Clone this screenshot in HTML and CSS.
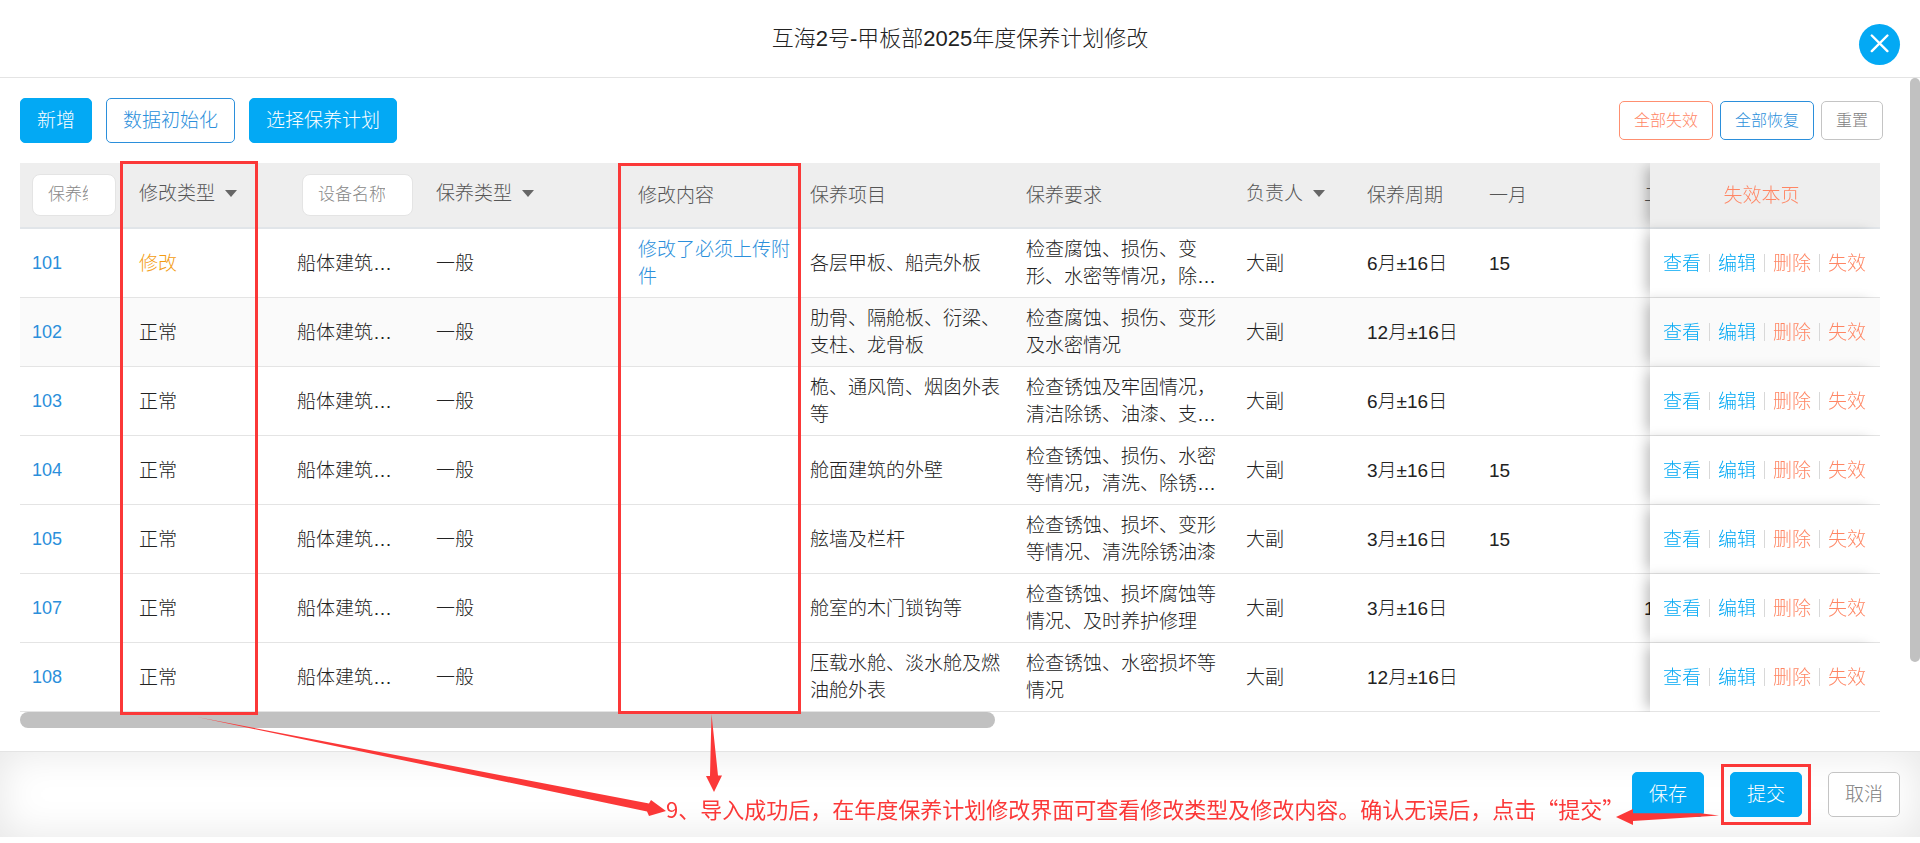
FILE: index.html
```html
<!DOCTYPE html>
<html lang="zh-CN">
<head>
<meta charset="utf-8">
<title>互海2号-甲板部2025年度保养计划修改</title>
<link rel="stylesheet" href="styles.css">
</head>
<body>
<div class="dialog">
  <header class="dialog-header">
    <h1 class="dialog-title">互海2号-甲板部2025年度保养计划修改</h1>
    <button class="close" type="button" aria-label="关闭">
      <svg width="19" height="21" viewBox="0 0 19 21" fill="none" stroke="#fff" stroke-width="2.4" stroke-linecap="round"><path d="M1.8 1.5l15.6 15.6M17.4 1.5l-15.6 15.6"/></svg>
    </button>
  </header>

  <main class="dialog-body">
    <div class="toolbar">
      <div class="toolbar-left">
        <button class="btn btn-primary" type="button">新增</button>
        <button class="btn btn-outline" type="button">数据初始化</button>
        <button class="btn btn-primary" type="button">选择保养计划</button>
      </div>
      <div class="toolbar-right">
        <button class="btn btn-small btn-warn" type="button">全部失效</button>
        <button class="btn btn-small btn-outline" type="button">全部恢复</button>
        <button class="btn btn-small btn-plain" type="button">重置</button>
      </div>
    </div>

    <div class="table-wrap">
      <table class="plan">
        <colgroup>
          <col class="c-no"><col class="c-change"><col class="c-device"><col class="c-kind"><col class="c-content"><col class="c-item"><col class="c-req"><col class="c-owner"><col class="c-cycle"><col class="c-month"><col class="c-month"><col class="c-actions">
        </colgroup>
        <thead>
          <tr>
            <th class="search"><input class="filter" type="text" placeholder="保养编号" aria-label="保养编号"></th>
            <th><button class="sort" type="button">修改类型<span class="caret"></span></button></th>
            <th class="search"><input class="filter filter-device" type="text" placeholder="设备名称" aria-label="设备名称"></th>
            <th><button class="sort" type="button">保养类型<span class="caret"></span></button></th>
            <th>修改内容</th>
            <th>保养项目</th>
            <th>保养要求</th>
            <th><button class="sort" type="button">负责人<span class="caret"></span></button></th>
            <th>保养周期</th>
            <th>一月</th>
            <th>二月</th>
            <th class="actions-head"><a class="warn" href="#">失效本页</a></th>
          </tr>
        </thead>
        <tbody>
          <tr>
            <td><a class="link number" href="#">101</a></td><td class="changed">修改</td><td>船体建筑…</td><td>一般</td>
            <td><a class="link" href="#">修改了必须上传附件</a></td><td>各层甲板、船壳外板</td><td>检查腐蚀、损伤、变形、水密等情况，除…</td>
            <td>大副</td><td>6月±16日</td><td>15</td><td></td>
            <td class="actions"><div class="ops"><a href="#">查看</a><a href="#">编辑</a><a class="warn" href="#">删除</a><a class="warn" href="#">失效</a></div></td>
          </tr>
          <tr>
            <td><a class="link number" href="#">102</a></td><td>正常</td><td>船体建筑…</td><td>一般</td>
            <td></td><td>肋骨、隔舱板、衍梁、支柱、龙骨板</td><td>检查腐蚀、损伤、变形及水密情况</td>
            <td>大副</td><td>12月±16日</td><td></td><td></td>
            <td class="actions"><div class="ops"><a href="#">查看</a><a href="#">编辑</a><a class="warn" href="#">删除</a><a class="warn" href="#">失效</a></div></td>
          </tr>
          <tr>
            <td><a class="link number" href="#">103</a></td><td>正常</td><td>船体建筑…</td><td>一般</td>
            <td></td><td>桅、通风筒、烟囱外表等</td><td>检查锈蚀及牢固情况，清洁除锈、油漆、支…</td>
            <td>大副</td><td>6月±16日</td><td></td><td></td>
            <td class="actions"><div class="ops"><a href="#">查看</a><a href="#">编辑</a><a class="warn" href="#">删除</a><a class="warn" href="#">失效</a></div></td>
          </tr>
          <tr>
            <td><a class="link number" href="#">104</a></td><td>正常</td><td>船体建筑…</td><td>一般</td>
            <td></td><td>舱面建筑的外壁</td><td>检查锈蚀、损伤、水密等情况，清洗、除锈…</td>
            <td>大副</td><td>3月±16日</td><td>15</td><td></td>
            <td class="actions"><div class="ops"><a href="#">查看</a><a href="#">编辑</a><a class="warn" href="#">删除</a><a class="warn" href="#">失效</a></div></td>
          </tr>
          <tr>
            <td><a class="link number" href="#">105</a></td><td>正常</td><td>船体建筑…</td><td>一般</td>
            <td></td><td>舷墙及栏杆</td><td>检查锈蚀、损坏、变形等情况、清洗除锈油漆</td>
            <td>大副</td><td>3月±16日</td><td>15</td><td></td>
            <td class="actions"><div class="ops"><a href="#">查看</a><a href="#">编辑</a><a class="warn" href="#">删除</a><a class="warn" href="#">失效</a></div></td>
          </tr>
          <tr>
            <td><a class="link number" href="#">107</a></td><td>正常</td><td>船体建筑…</td><td>一般</td>
            <td></td><td>舱室的木门锁钩等</td><td>检查锈蚀、损坏腐蚀等情况、及时养护修理</td>
            <td>大副</td><td>3月±16日</td><td></td><td>15</td>
            <td class="actions"><div class="ops"><a href="#">查看</a><a href="#">编辑</a><a class="warn" href="#">删除</a><a class="warn" href="#">失效</a></div></td>
          </tr>
          <tr>
            <td><a class="link number" href="#">108</a></td><td>正常</td><td>船体建筑…</td><td>一般</td>
            <td></td><td>压载水舱、淡水舱及燃油舱外表</td><td>检查锈蚀、水密损坏等情况</td>
            <td>大副</td><td>12月±16日</td><td></td><td></td>
            <td class="actions"><div class="ops"><a href="#">查看</a><a href="#">编辑</a><a class="warn" href="#">删除</a><a class="warn" href="#">失效</a></div></td>
          </tr>
        </tbody>
      </table>
    </div>
    <div class="hscroll"><div class="hscroll-thumb"></div></div>
    <div class="vscroll-thumb"></div>
  </main>

  <footer class="dialog-footer">
    <button class="btn btn-primary" type="button">保存</button>
    <button class="btn btn-primary" type="button">提交</button>
    <button class="btn btn-plain" type="button">取消</button>
  </footer>

  <div class="mark mark-type"></div>
  <div class="mark mark-content"></div>
  <div class="mark mark-submit"></div>
  <svg class="arrows" width="1920" height="843" viewBox="0 0 1920 843" fill="#fb3838" aria-hidden="true">
    <path d="M197 717L649 803.5L651 800L666 811L649 816L647 811.5Z"/>
    <path d="M711.5 714L718 775.5H722L714 792L706 776H710Z"/>
    <path d="M1719 815.5L1700 813.2H1633V809L1616 817L1633 825V821Z"/>
  </svg>
  <p class="note">9、导入成功后，在年度保养计划修改界面可查看修改类型及修改内容。确认无误后，点击“提交”</p>
</div>
</body>
</html>
```

FILE: styles.css
```css
* { box-sizing: border-box; }

body {
  margin: 0;
  background: #fff;
  color: #222;
  font-family: "Liberation Sans", "Noto Sans CJK SC", sans-serif;
  font-size: 19px;
  font-weight: 300;
  line-height: 27px;
}

button, input { font: inherit; }
a { color: #03a9f4; text-decoration: none; }

.dialog {
  position: relative;
  display: flex;
  flex-direction: column;
  min-height: 100vh;
  padding-bottom: 6px;
  overflow: hidden;
}

/* header */
.dialog-header {
  position: relative;
  display: flex;
  align-items: center;
  justify-content: center;
  height: 78px;
  border-bottom: 1px solid #e4e4e4;
}
.dialog-title {
  margin: 0;
  font-size: 22px;
  font-weight: 300;
}
.close {
  position: absolute;
  top: 24px;
  right: 20px;
  display: grid;
  place-items: center;
  width: 41px;
  height: 41px;
  padding: 0;
  border: 0;
  border-radius: 50%;
  background: #03a9f4;
}

/* buttons */
.btn {
  height: 45px;
  padding: 0 16px;
  border: 1px solid transparent;
  border-radius: 5px;
  background: #fff;
  white-space: nowrap;
}
.btn-primary { border-color: #03a9f4; background: #03a9f4; color: #fff; }
.btn-outline { border-color: #2b8fdb; color: #2b8fdb; }
.btn-warn { border-color: #ff8f70; color: #ff8664; }
.btn-plain { border-color: #c4c4c4; color: #808080; }
.btn-small { height: 39px; padding: 0 14px; font-size: 16px; }

/* body */
.dialog-body {
  position: relative;
  flex: 1;
  padding: 20px 40px 0 20px;
}
.toolbar {
  display: flex;
  align-items: center;
  justify-content: space-between;
  margin: 0 -3px 20px 0;
}
.toolbar-left { display: flex; gap: 14px; }
.toolbar-right { display: flex; gap: 7px; }

/* table */
.table-wrap { overflow: hidden; }
.plan {
  width: 1997px;
  table-layout: fixed;
  border-collapse: separate;
  border-spacing: 0;
}
.c-no { width: 107px; }
.c-change { width: 158px; }
.c-device { width: 139px; }
.c-kind { width: 202px; }
.c-content { width: 172px; }
.c-item { width: 216px; }
.c-req { width: 220px; }
.c-owner { width: 121px; }
.c-cycle { width: 122px; }
.c-month { width: 155px; }
.c-actions { width: 230px; }

.plan th {
  height: 66px;
  padding: 0 6px 0 12px;
  border-bottom: 2px solid #e1e5e9;
  background: #eee;
  color: #555;
  font-weight: 300;
  text-align: left;
}
.plan td {
  height: 69px;
  padding: 7px 6px 7px 12px;
  border-bottom: 1px solid #e4e4e4;
  background: #fff;
}
.plan tbody tr:nth-child(2) td { background: #fafafa; }
.plan .search { padding-right: 11px; }
.plan .changed { color: #f39c12; }
.link { color: #2b8fdb; }
.number { font-size: 18px; }
.plan .warn { color: #ff8664; }

.filter {
  display: block;
  width: 100%;
  height: 42px;
  padding: 0 27px 0 15px;
  border: 1px solid #e4e4e4;
  border-radius: 8px;
  background: #fff;
  font-size: 17px;
}
.filter::placeholder { color: #888; opacity: 1; }
.plan .filter-device { width: 111px; margin-left: 5px; }

.sort {
  display: flex;
  align-items: center;
  gap: 10px;
  padding: 0 0 4px;
  border: 0;
  background: none;
  color: inherit;
}
.caret {
  border: 6px solid transparent;
  border-top: 7px solid #666;
  border-bottom: 0;
}

.plan .actions-head,
.plan .actions {
  position: sticky;
  right: 0;
  padding-left: 13px;
  box-shadow: -8px 0 12px -4px rgba(0, 0, 0, 0.25);
}
.plan .actions-head { padding-right: 20px; text-align: center; }
.ops { display: flex; }
.ops a {
  display: flex;
  align-items: center;
}
.ops a + a::before {
  content: "";
  width: 1px;
  height: 18px;
  margin: 0 8px;
  background: #d8d8d8;
}

/* scrollbars */
.hscroll-thumb {
  width: 52.4%;
  height: 16px;
  border-radius: 8px;
  background: #c1c1c1;
}
.vscroll-thumb {
  position: absolute;
  top: 0;
  right: 0;
  width: 10px;
  height: 584px;
  border-radius: 5px;
  background: #c1c1c1;
}

/* footer */
.dialog-footer {
  display: flex;
  justify-content: flex-end;
  gap: 26px;
  height: 86px;
  padding: 20px 20px 0;
  border-top: 1px solid #e4e4e4;
  box-shadow: inset 0 0 40px rgba(0, 0, 0, 0.1);
}

/* annotations */
.mark {
  position: absolute;
  border: 3px solid #fb3838;
}
.mark-type { left: 120px; top: 161px; width: 138px; height: 554px; }
.mark-content { left: 618px; top: 163px; width: 183px; height: 551px; }
.mark-submit { right: 109px; bottom: 18px; width: 90px; height: 61px; }
.arrows {
  position: absolute;
  left: 0;
  top: 0;
  pointer-events: none;
}
.note {
  position: absolute;
  left: 666px;
  top: 795px;
  margin: 0;
  color: #fb3838;
  font-family: "Noto Sans CJK SC", sans-serif;
  font-size: 22px;
  font-weight: 400;
  white-space: nowrap;
}
```
